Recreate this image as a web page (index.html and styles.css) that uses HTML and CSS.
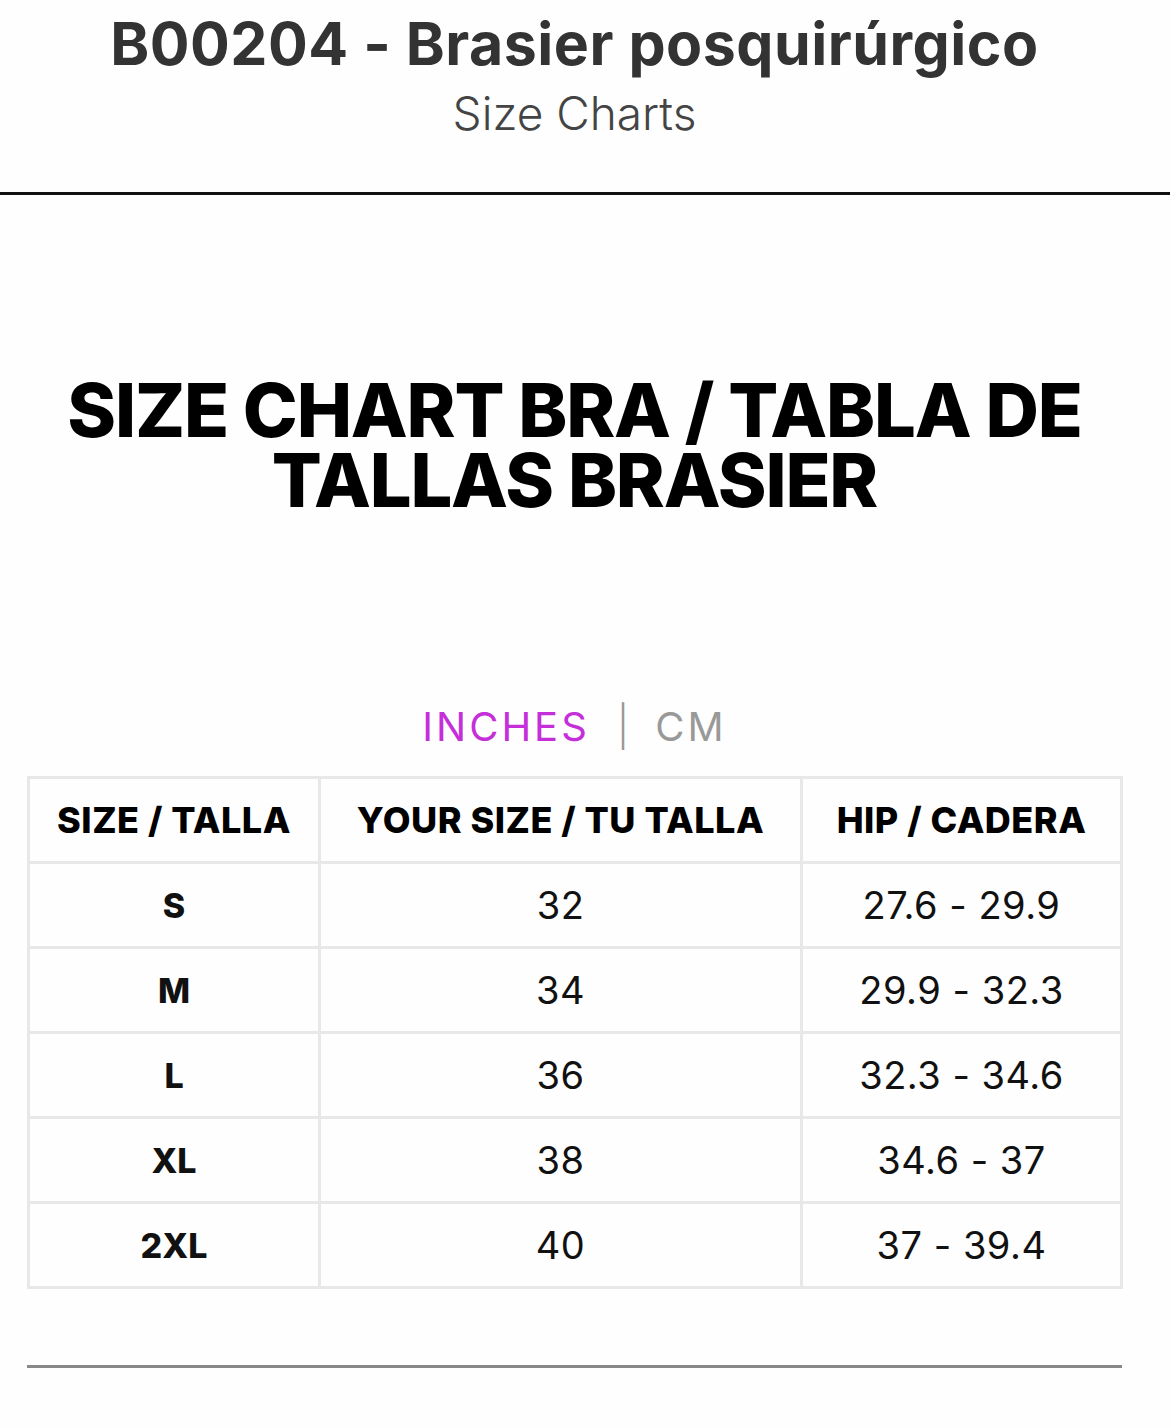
FILE: index.html
```html
<!DOCTYPE html>
<html lang="es">
<head>
<meta charset="utf-8">
<title>B00204 - Brasier posquirúrgico</title>
<link rel="stylesheet" href="styles.css">
</head>
<body>
<header class="top">
  <h1 class="product">B00204 - Brasier posquirúrgico</h1>
  <p class="sub">Size Charts</p>
</header>
<main class="chart">
  <h2 class="chart-title">SIZE CHART BRA / TABLA DE<br>TALLAS BRASIER</h2>
  <div class="units">
    <span class="unit active">INCHES</span>
    <span class="sep">|</span>
    <span class="unit">CM</span>
  </div>
  <table class="sizes">
    <colgroup>
      <col class="c1"><col class="c2"><col class="c3">
    </colgroup>
    <thead>
      <tr><th>SIZE / TALLA</th><th>YOUR SIZE / TU TALLA</th><th>HIP / CADERA</th></tr>
    </thead>
    <tbody>
      <tr><td class="sz">S</td><td>32</td><td>27.6 - 29.9</td></tr>
      <tr><td class="sz">M</td><td>34</td><td>29.9 - 32.3</td></tr>
      <tr><td class="sz">L</td><td>36</td><td>32.3 - 34.6</td></tr>
      <tr><td class="sz">XL</td><td>38</td><td>34.6 - 37</td></tr>
      <tr><td class="sz">2XL</td><td>40</td><td>37 - 39.4</td></tr>
    </tbody>
  </table>
  <hr class="rule">
</main>
</body>
</html>
```

FILE: styles.css
```css
html, body {
  margin: 0;
  padding: 0;
  background: #fefefe;
  font-family: Inter, "Noto Sans", sans-serif;
  color: #000;
}

.top {
  text-align: center;
  border-bottom: 3px solid #111;
  height: 195px;
  box-sizing: border-box;
  padding: 11px 21px 0 0;
}

.product {
  margin: 0;
  font-size: 59px;
  font-weight: 700;
  color: #333;
  line-height: 66px;
  letter-spacing: 0.5px;
}

.sub {
  margin: 6px 0 0;
  font-size: 46px;
  font-weight: 300;
  color: #444;
  line-height: 60px;
}

.chart {
  padding: 0 48px 0 27px;
}

.chart-title {
  margin: 180px 0 0;
  text-align: center;
  font-size: 74px;
  font-weight: 800;
  line-height: 70px;
  letter-spacing: -1.2px;
}

.units {
  margin-top: 187px;
  display: flex;
  justify-content: center;
  align-items: center;
  font-size: 40px;
  letter-spacing: 3px;
  line-height: 50px;
}

.unit { color: #999; font-weight: 400; }
.unit.active { color: #c52fd9; }
.sep { color: #999; font-weight: 300; margin: 0 23px 0 27px; }

.sizes {
  margin-top: 24px;
  width: 1093px;
  border-collapse: collapse;
  table-layout: fixed;
}

.c1 { width: 291px; }
.c2 { width: 482px; }
.c3 { width: 320px; }

.sizes th, .sizes td {
  border: 3px solid #e8e8e8;
  height: 82px;
  text-align: center;
  padding: 0;
}

.sizes th {
  font-size: 36px;
  font-weight: 800;
  letter-spacing: 0.5px;
  color: #000;
}

.sizes td {
  font-size: 38px;
  font-weight: 400;
  letter-spacing: 0.5px;
  color: #111;
}

.sizes td.sz {
  font-weight: 800;
  font-size: 34px;
  letter-spacing: 0;
}

.rule {
  margin: 76px 0 0;
  width: 1095px;
  border: 0;
  border-top: 3px solid #888;
}
```
